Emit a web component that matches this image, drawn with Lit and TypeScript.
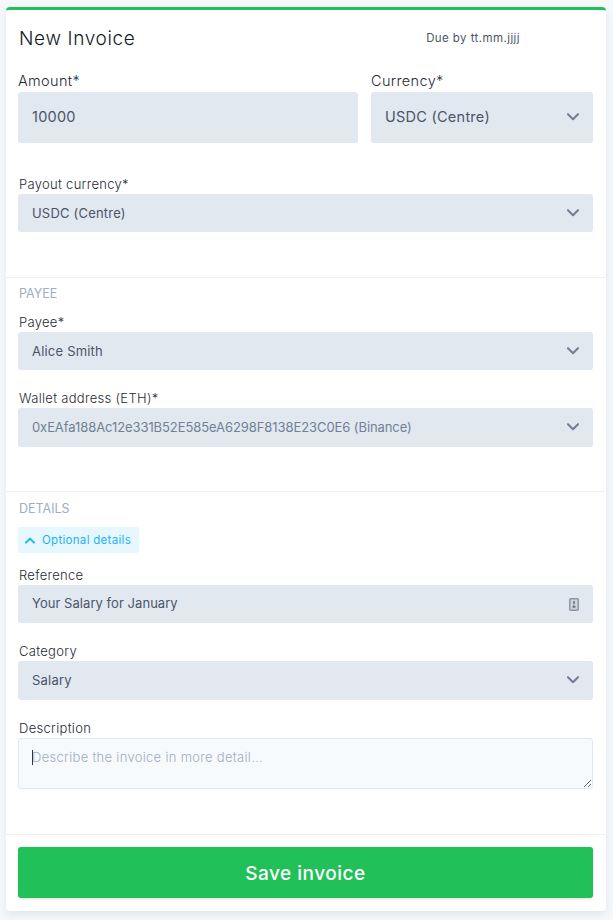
import { css, html, LitElement, TemplateResult } from "lit";
import { customElement } from "lit/decorators.js";

const chevron = html`<svg class="chevron" viewBox="0 0 12 8" width="12" height="8" fill="none">
    <path d="M1 1.2 6 6.2 11 1.2" stroke="currentColor" stroke-width="2.1" stroke-linecap="round" stroke-linejoin="round"></path>
</svg>`;

@customElement("app-root")
export class AppRoot extends LitElement {
    protected selectField(label: string, value: string, cls: string = ""): TemplateResult {
        return html`
            <div class="field ${cls}">
                <label>${label}</label>
                <div class="control">
                    <select>
                        <option>${value}</option>
                    </select>
                    ${chevron}
                </div>
            </div>
        `;
    }

    protected render(): TemplateResult {
        return html`
            <div class="card">
                <section class="first">
                    <div class="head">
                        <h1>New Invoice</h1>
                        <span class="due">Due by tt.mm.jjjj</span>
                    </div>
                    <div class="row">
                        <div class="field large amount">
                            <label>Amount*</label>
                            <div class="control"><input type="text" .value=${"10000"} /></div>
                        </div>
                        ${this.selectField("Currency*", "USDC (Centre)", "large currency")}
                    </div>
                    ${this.selectField("Payout currency*", "USDC (Centre)", "payout")}
                </section>
                <section>
                    <h2>Payee</h2>
                    ${this.selectField("Payee*", "Alice Smith")}
                    ${this.selectField("Wallet address (ETH)*", "0xEAfa188Ac12e331B52E585eA6298F8138E23C0E6 (Binance)", "wallet tall")}
                </section>
                <section class="details">
                    <h2>Details</h2>
                    <button type="button" class="toggle">
                        <svg viewBox="0 0 10 7" width="10" height="7" fill="none">
                            <path d="M1 5.6 5 1.6 9 5.6" stroke="currentColor" stroke-width="2" stroke-linecap="round" stroke-linejoin="round"></path>
                        </svg>
                        Optional details
                    </button>
                    <div class="field">
                        <label>Reference</label>
                        <div class="control">
                            <input class="reference" type="text" .value=${"Your Salary for January"} />
                            <svg class="badge" viewBox="0 0 10 13" width="10" height="13" fill="none">
                                <rect x="0.75" y="0.75" width="8.5" height="11.5" rx="1" fill="#cfd5df" stroke="#8f96a1" stroke-width="1.5"></rect>
                                <rect x="4.2" y="3" width="1.6" height="3.2" fill="#6d7480"></rect>
                                <rect x="3.6" y="7.6" width="2.8" height="2.2" fill="#6d7480"></rect>
                            </svg>
                        </div>
                    </div>
                    ${this.selectField("Category", "Salary", "tall")}
                    <div class="field">
                        <label>Description</label>
                        <div class="control">
                            <textarea placeholder="Describe the invoice in more detail..."></textarea>
                            <span class="caret"></span>
                        </div>
                    </div>
                </section>
                <footer>
                    <button type="button" class="save">Save invoice</button>
                </footer>
            </div>
        `;
    }

    static styles = css`
        :host {
            display: block;
            box-sizing: border-box;
            height: 920px;
            padding: 7px 7px 0 6px;
            background: #f6f9fc;
            font-family: Inter, "Open Sans", sans-serif;
            color: #2d3748;
        }
        * {
            box-sizing: border-box;
        }
        .card {
            height: 904px;
            background: #fff;
            border-top: 3px solid #22c058;
            border-radius: 4px;
            box-shadow: 0 4px 10px rgba(45, 60, 90, 0.1);
        }
        section {
            padding: 5px 13px 44px 12px;
            border-bottom: 1px solid #edf2f7;
        }
        section.first {
            height: 268px;
            padding-top: 0;
        }
        section.details {
            padding-top: 6px;
            padding-bottom: 45px;
        }
        .head {
            display: flex;
            align-items: center;
            height: 54px;
            padding-top: 2px;
        }
        h1 {
            margin: 0 0 0 1px;
            font-size: 19px;
            font-weight: 300;
            letter-spacing: 0.65px;
            color: #111a26;
        }
        .due {
            margin-left: auto;
            margin-right: 73px;
            font-size: 11.5px;
            font-weight: 400;
            letter-spacing: 0.42px;
            color: #4a5568;
        }
        h2 {
            margin: 0 0 9px 1px;
            height: 20px;
            line-height: 22px;
            font-size: 12.5px;
            font-weight: 400;
            text-transform: uppercase;
            color: #a0aec0;
        }
        .row {
            display: flex;
            gap: 13px;
            margin-top: 7px;
        }
        .amount {
            width: 340px;
        }
        .currency {
            width: 222px;
        }
        .field {
            margin-top: 18px;
        }
        .row .field {
            margin-top: 0;
        }
        h2 + .field {
            margin-top: 0;
        }
        .payout {
            margin-top: 31px;
        }
        label {
            display: block;
            height: 20px;
            line-height: 20px;
            padding-left: 1px;
            font-size: 13px;
            font-weight: 300;
            letter-spacing: 0.3px;
            color: #1f2a37;
        }
        .large label {
            height: 21px;
            line-height: 19px;
            padding-left: 0;
            font-size: 14.5px;
            letter-spacing: 0.35px;
        }
        .control {
            position: relative;
            color: #718096;
        }
        input,
        select {
            display: block;
            width: 100%;
            height: 38px;
            padding: 0 14px 1px;
            border: 0;
            border-radius: 3px;
            outline: 0;
            appearance: none;
            background: #e2e8f0;
            font: inherit;
            font-size: 13px;
            font-weight: 400;
            letter-spacing: 0.2px;
            color: #4a5568;
        }
        input.reference {
            padding-bottom: 2px;
            letter-spacing: 0.05px;
        }
        .tall select {
            height: 39px;
            padding-bottom: 2px;
        }
        .large input,
        .large select {
            height: 51px;
            padding-bottom: 2px;
            font-size: 14.5px;
            letter-spacing: 0.25px;
        }
        .wallet select {
            color: #718096;
            letter-spacing: -0.08px;
        }
        .chevron {
            position: absolute;
            top: 15px;
            right: 14px;
            pointer-events: none;
        }
        .large .chevron {
            top: 21px;
        }
        .badge {
            position: absolute;
            top: 13px;
            right: 14px;
        }
        textarea {
            display: block;
            width: 100%;
            height: 51px;
            padding: 10px 13px 6px;
            border: 1px solid #e2e8f0;
            border-radius: 3px;
            outline: 0;
            background: #f7fafc;
            font: inherit;
            font-size: 13px;
            font-weight: 300;
            letter-spacing: 0.3px;
            color: #4a5568;
        }
        textarea::placeholder {
            color: #a0aec0;
            opacity: 1;
        }
        .caret {
            position: absolute;
            top: 12px;
            left: 14px;
            width: 1px;
            height: 15px;
            background: #2d3748;
        }
        .toggle {
            display: flex;
            align-items: center;
            gap: 7px;
            height: 26px;
            width: 121px;
            margin: 0 0 12px;
            padding: 0 0 0 7px;
            border: 0;
            border-radius: 3px;
            background: #e6f7ff;
            font: inherit;
            font-size: 11.5px;
            font-weight: 400;
            letter-spacing: 0.3px;
            color: #1cb5f0;
        }
        .toggle + .field {
            margin-top: 0;
        }
        footer {
            padding: 12px 13px 12px 12px;
        }
        .save {
            display: block;
            width: 100%;
            height: 51px;
            padding-top: 2px;
            border: 0;
            border-radius: 3px;
            background: #22c058;
            box-shadow: 0 1px 3px rgba(0, 0, 0, 0.12);
            font: inherit;
            font-size: 19px;
            font-weight: 500;
            letter-spacing: 0.5px;
            color: #fff;
        }
    `;
}
